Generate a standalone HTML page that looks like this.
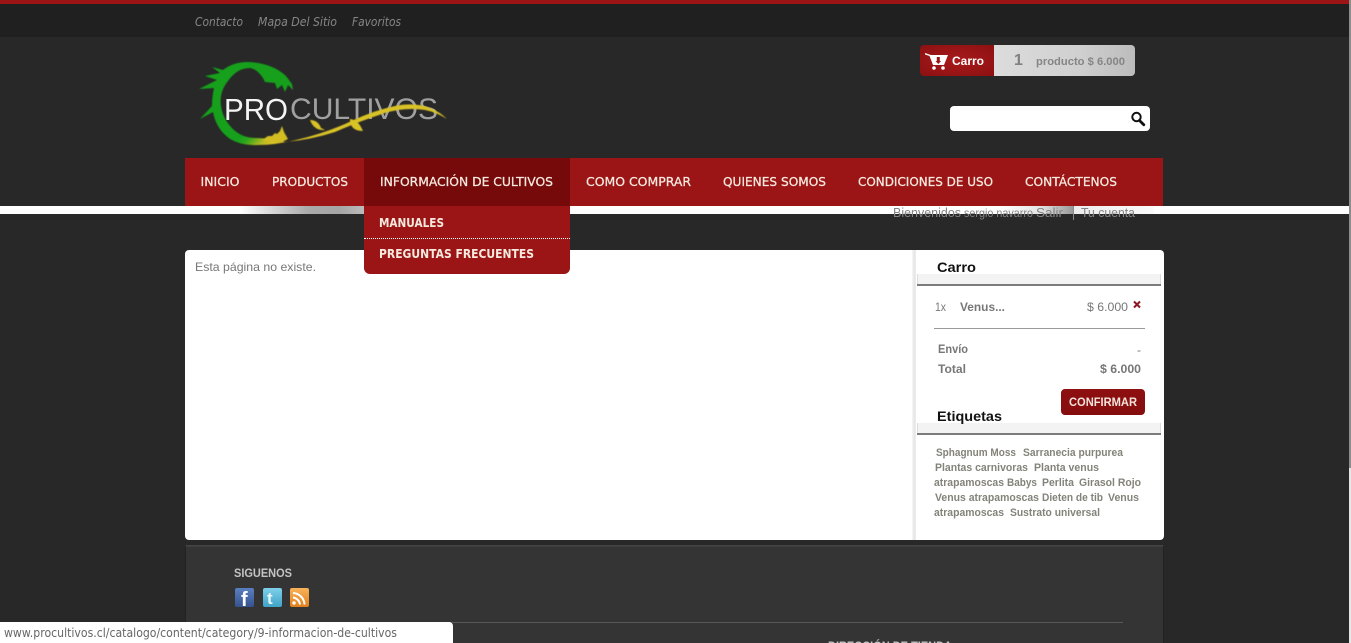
<!DOCTYPE html>
<html lang="es">
<head>
<meta charset="utf-8">
<title>Procultivos</title>
<style>
html,body{margin:0;padding:0;width:1351px;height:643px;overflow:hidden;background:#282828}
.b{position:absolute}
svg.o{position:absolute;left:0;top:0}
text{font-family:"Liberation Sans",sans-serif;white-space:pre}
.nav{font-family:"DejaVu Sans",sans-serif;font-size:12px;fill:#f6eadf;stroke:#f6eadf;stroke-width:.25px}
.sub{font-family:"DejaVu Sans",sans-serif;font-size:12px;fill:#f6eadf;font-weight:700}
.top{font-family:"DejaVu Sans",sans-serif;font-style:italic;font-size:12px;fill:#868686}
.g{font-size:12px;fill:#777}
.gb{font-size:12px;fill:#777;font-weight:700}
.h{font-size:14px;fill:#111;font-weight:700}
.t{font-size:11px;fill:#83837a;font-weight:700}
</style>
</head>
<body>
<div class="b" style="left:0;top:0;width:1351px;height:4px;background:#9b1516"></div>
<div class="b" style="left:0;top:4px;width:1351px;height:33px;background:#202020"></div>
<div class="b" style="left:0;top:206px;width:1351px;height:8px;background:#fff"></div>
<div class="b" style="left:240px;top:206px;width:124px;height:8px;background:linear-gradient(90deg,#fff,#aaa 55%,#a5a5a5 80%,#bbb)"></div>
<div class="b" style="left:1000px;top:206px;width:73px;height:8px;background:linear-gradient(90deg,#fff,#e4e4e4 55%,#999)"></div>
<div class="b" style="left:1074px;top:206px;width:80px;height:8px;background:linear-gradient(90deg,#ececec,#fafafa)"></div>

<div class="b" style="left:920px;top:45px;width:74px;height:31px;border-radius:4px 0 0 4px;background:radial-gradient(ellipse at 50% 50%,#a81a1b,#8c1011)"></div>
<div class="b" style="left:994px;top:45px;width:141px;height:31px;border-radius:0 4px 4px 0;background:linear-gradient(90deg,#dcdcdc,#d0d0d0 60%,#bcbcbc)"></div>
<div class="b" style="left:950px;top:106px;width:200px;height:25px;border-radius:4px;background:#fff"></div>

<div class="b" style="left:185px;top:158px;width:978px;height:48px;background:#9b1516"></div>
<div class="b" style="left:364px;top:158px;width:206px;height:48px;background:#760a0b"></div>

<div class="b" style="left:185px;top:250px;width:979px;height:290px;background:#fff;border-radius:4px"></div>
<div class="b" style="left:912px;top:250px;width:4px;height:290px;background:linear-gradient(90deg,#f6f6f6,#e4e4e4 70%,#f0f0f0)"></div>
<div class="b" style="left:917px;top:274px;width:244px;height:10px;background:#f3f3f3;box-sizing:border-box;border-left:1px solid #ddd;border-right:1px solid #ddd"></div>
<div class="b" style="left:917px;top:284px;width:244px;height:2px;background:#7c7c7c"></div>
<div class="b" style="left:934px;top:328px;width:211px;height:1px;background:#999"></div>
<div class="b" style="left:917px;top:423px;width:244px;height:10px;background:#f3f3f3;box-sizing:border-box;border-left:1px solid #ddd;border-right:1px solid #ddd"></div>
<div class="b" style="left:917px;top:433px;width:244px;height:2px;background:#7c7c7c"></div>
<div class="b" style="left:1061px;top:389px;width:84px;height:26px;border-radius:4px;background:linear-gradient(#8e1011,#850d0e)"></div>

<div class="b" style="left:364px;top:206px;width:206px;height:68px;background:#9b1516;border-radius:0 0 6px 6px"></div>
<div class="b" style="left:364px;top:238px;width:206px;height:0;border-top:1px dotted #fff"></div>

<div class="b" style="left:185px;top:545px;width:979px;height:98px;box-sizing:border-box;background:#343434;border:1px solid #222;border-top:1px solid #444;border-bottom:0;box-shadow:inset 0 1px 0 #3d3d3d"></div>
<div class="b" style="left:213px;top:622px;width:910px;height:1px;background:#585858"></div>

<div class="b" style="left:235px;top:588px;width:19px;height:19px;border-radius:2px;background:linear-gradient(#5a7fc0,#35528f)"></div>
<div class="b" style="left:263px;top:588px;width:19px;height:19px;border-radius:2px;background:linear-gradient(#7fd0ea,#3fa3c8)"></div>
<div class="b" style="left:290px;top:588px;width:19px;height:19px;border-radius:2px;background:linear-gradient(#f8b25a,#e27f1c)"></div>

<div class="b" style="left:0;top:622px;width:453px;height:21px;background:#fff;border-radius:0 4px 0 0"></div>
<div class="b" style="left:1349px;top:0;width:2px;height:468px;background:#8d8d8d"></div>
<div class="b" style="left:1349px;top:468px;width:2px;height:175px;background:#e6e6e6"></div>

<svg class="o" width="1351" height="643" viewBox="0 0 1351 643" xmlns="http://www.w3.org/2000/svg">
<defs>
<linearGradient id="lg" gradientUnits="userSpaceOnUse" x1="250" y1="125" x2="270" y2="145">
<stop offset="0" stop-color="#13a01c"/><stop offset=".3" stop-color="#2ca51a"/><stop offset=".75" stop-color="#b8bb22"/><stop offset="1" stop-color="#d8c225"/>
</linearGradient>
<filter id="bl"><feGaussianBlur stdDeviation=".4"/></filter>
</defs>

<!-- top links -->
<text class="top" x="195" y="26" textLength="48" lengthAdjust="spacingAndGlyphs">Contacto</text>
<text class="top" x="258" y="26" textLength="79" lengthAdjust="spacingAndGlyphs">Mapa Del Sitio</text>
<text class="top" x="352" y="26" textLength="49" lengthAdjust="spacingAndGlyphs">Favoritos</text>

<!-- logo text, below the tail -->
<text x="224" y="120" font-size="31" fill="#f4f4f4" textLength="64" lengthAdjust="spacingAndGlyphs">PRO</text>
<text x="290" y="119" font-size="30" fill="#a0a0a0" textLength="148" lengthAdjust="spacingAndGlyphs">CULTIVOS</text>

<!-- logo mark -->
<g filter="url(#bl)">
<path fill="url(#lg)" d="M293 90 L292 84 L286 76 Q272 63 248 62 Q233 62 223 70 L212 67 L220 73 L205 76 L217 80 L199 89 L214 88 Q212 97 212 106 L200 119 L213 112 Q216 129 230 139 Q242 146 258 145 Q275 145 296 140 Q322 134 345 124 Q372 111 395 106 Q415 102 430 108 Q440 112 447 119 Q436 112 425 110 Q405 107 385 113 Q360 121 335 132 Q310 140 285 142 Q268 138 256 138 Q243 138 234 130 Q223 120 221 106 Q219 92 228 81 Q237 68 250 68 Q257 69 263 78 L265 82 L275 83 L277 89 L282 85 L285 92 L288 85 Z"/>
<path fill="#d3bd24" d="M262 140 L268 136 L272 136 L275 133 L277 134 L280 131 L282 126 L284 132 L288 139 L280 143 Z"/>
<path fill="#d8c226" d="M310 120 Q318 120 321 128 L325 130 Q314 131 310 120 Z"/>
<path fill="#d8c226" d="M350 119 Q358 120 362 129 L363 131 Q350 131 350 119 Z"/>
</g>

<!-- cart -->
<path fill="#fff" d="M925 53 L931 55 L948 55 L944 65 L933 65 L929.500 56 L925 54.500 Z"/>
<rect x="936.800" y="57" width="3" height="4" fill="#9b1516"/><path d="M935.500 61 h5.600 l-2.800 3 Z" fill="#9b1516"/>
<circle cx="934" cy="68" r="1.800" fill="#fff"/><circle cx="943" cy="68" r="1.800" fill="#fff"/>
<text x="952" y="65" font-size="12" font-weight="700" fill="#fff" textLength="32" lengthAdjust="spacingAndGlyphs">Carro</text>
<text x="1014" y="65" font-size="16" font-weight="700" fill="#808080">1</text>
<text x="1036" y="65" font-size="11" font-weight="700" fill="#858585" textLength="89" lengthAdjust="spacingAndGlyphs">producto $ 6.000</text>

<!-- search icon -->
<circle cx="1136.500" cy="117" r="4.200" fill="none" stroke="#111" stroke-width="2"/>
<path d="M1139.500 120.500 L1143.800 124.800" stroke="#111" stroke-width="2.800" stroke-linecap="round"/>

<!-- nav -->
<text class="nav" x="200.500" y="186" textLength="39" lengthAdjust="spacingAndGlyphs">INICIO</text>
<text class="nav" x="272" y="186" textLength="76" lengthAdjust="spacingAndGlyphs">PRODUCTOS</text>
<text class="nav" x="380" y="186" textLength="173" lengthAdjust="spacingAndGlyphs">INFORMACIÓN DE CULTIVOS</text>
<text class="nav" x="586" y="186" textLength="105" lengthAdjust="spacingAndGlyphs">COMO COMPRAR</text>
<text class="nav" x="723" y="186" textLength="103" lengthAdjust="spacingAndGlyphs">QUIENES SOMOS</text>
<text class="nav" x="858" y="186" textLength="135" lengthAdjust="spacingAndGlyphs">CONDICIONES DE USO</text>
<text class="nav" x="1025" y="186" textLength="92" lengthAdjust="spacingAndGlyphs">CONTÁCTENOS</text>
<text class="sub" x="379" y="227" textLength="65" lengthAdjust="spacingAndGlyphs">MANUALES</text>
<text class="sub" x="379" y="258" textLength="155" lengthAdjust="spacingAndGlyphs">PREGUNTAS FRECUENTES</text>

<!-- welcome -->
<text x="893" y="217" font-size="13" fill="#858585" textLength="68" lengthAdjust="spacingAndGlyphs">Bienvenidos</text>
<text x="964" y="217" font-size="12" fill="#858585" textLength="69" lengthAdjust="spacingAndGlyphs">sergio navarro</text>
<text x="1036" y="217" font-size="13" fill="#858585" textLength="27" lengthAdjust="spacingAndGlyphs">Salir</text>
<rect x="1073" y="206" width="1" height="14" fill="#888"/>
<text x="1081" y="217" font-size="13" fill="#858585" textLength="54" lengthAdjust="spacingAndGlyphs">Tu cuenta</text>

<!-- content -->
<text class="g" x="195" y="271" textLength="121" lengthAdjust="spacingAndGlyphs">Esta página no existe.</text>

<!-- sidebar -->
<text class="h" x="937" y="272" textLength="39" lengthAdjust="spacingAndGlyphs">Carro</text>
<text class="g" x="935" y="311" textLength="11" lengthAdjust="spacingAndGlyphs">1x</text>
<text class="gb" x="960" y="311" textLength="45" lengthAdjust="spacingAndGlyphs">Venus...</text>
<text class="g" x="1087" y="311" textLength="41" lengthAdjust="spacingAndGlyphs">$ 6.000</text>
<path d="M1134 301.500 L1140 307.500 M1140 301.500 L1134 307.500" stroke="#8a1a1f" stroke-width="2"/>
<text class="gb" x="938" y="353" textLength="30" lengthAdjust="spacingAndGlyphs">Envío</text>
<text class="g" x="1137" y="354">-</text>
<text class="gb" x="938" y="373" textLength="28" lengthAdjust="spacingAndGlyphs">Total</text>
<text class="gb" x="1100" y="373" textLength="41" lengthAdjust="spacingAndGlyphs">$ 6.000</text>
<text x="1069" y="406" font-size="12" font-weight="700" fill="#f4e4dc" textLength="68" lengthAdjust="spacingAndGlyphs">CONFIRMAR</text>
<text class="h" x="937" y="421" textLength="65" lengthAdjust="spacingAndGlyphs">Etiquetas</text>

<text class="t" x="936" y="456" textLength="80" lengthAdjust="spacingAndGlyphs">Sphagnum Moss</text>
<text class="t" x="1023" y="456" textLength="100" lengthAdjust="spacingAndGlyphs">Sarranecia purpurea</text>
<text class="t" x="935" y="471" textLength="93" lengthAdjust="spacingAndGlyphs">Plantas carnivoras</text>
<text class="t" x="1034" y="471" textLength="65" lengthAdjust="spacingAndGlyphs">Planta venus</text>
<text class="t" x="934" y="486" textLength="70" lengthAdjust="spacingAndGlyphs">atrapamoscas</text>
<text class="t" x="1007" y="486" textLength="30" lengthAdjust="spacingAndGlyphs">Babys</text>
<text class="t" x="1042" y="486" textLength="32" lengthAdjust="spacingAndGlyphs">Perlita</text>
<text class="t" x="1079" y="486" textLength="62" lengthAdjust="spacingAndGlyphs">Girasol Rojo</text>
<text class="t" x="935" y="501" textLength="104" lengthAdjust="spacingAndGlyphs">Venus atrapamoscas</text>
<text class="t" x="1042" y="501" textLength="61" lengthAdjust="spacingAndGlyphs">Dieten de tib</text>
<text class="t" x="1108" y="501" textLength="31" lengthAdjust="spacingAndGlyphs">Venus</text>
<text class="t" x="934" y="516" textLength="70" lengthAdjust="spacingAndGlyphs">atrapamoscas</text>
<text class="t" x="1010" y="516" textLength="90" lengthAdjust="spacingAndGlyphs">Sustrato universal</text>

<!-- footer -->
<text x="234" y="577" font-size="12" font-weight="700" fill="#c4c4c4" textLength="58" lengthAdjust="spacingAndGlyphs">SIGUENOS</text>
<text x="241" y="606" font-size="20" font-weight="700" fill="#fff">f</text>
<text x="267" y="604" font-size="17" font-weight="700" fill="#eaf8fc">t</text>
<circle cx="294" cy="603" r="1.700" fill="#fff"/>
<path d="M293 597.500 A8 8 0 0 1 300 604.500 M293 593 A12 12 0 0 1 304.500 604.500" fill="none" stroke="#fff" stroke-width="2"/>
<text x="828" y="650" font-size="12" font-weight="700" fill="#c4c4c4" textLength="124" lengthAdjust="spacingAndGlyphs">DIRECCIÓN DE TIENDA</text>

<text x="4" y="637" style="font-family:'DejaVu Sans',sans-serif" font-size="12.500" fill="#666" textLength="393" lengthAdjust="spacingAndGlyphs">www.procultivos.cl/catalogo/content/category/9-informacion-de-cultivos</text>
</svg>
</body>
</html>
